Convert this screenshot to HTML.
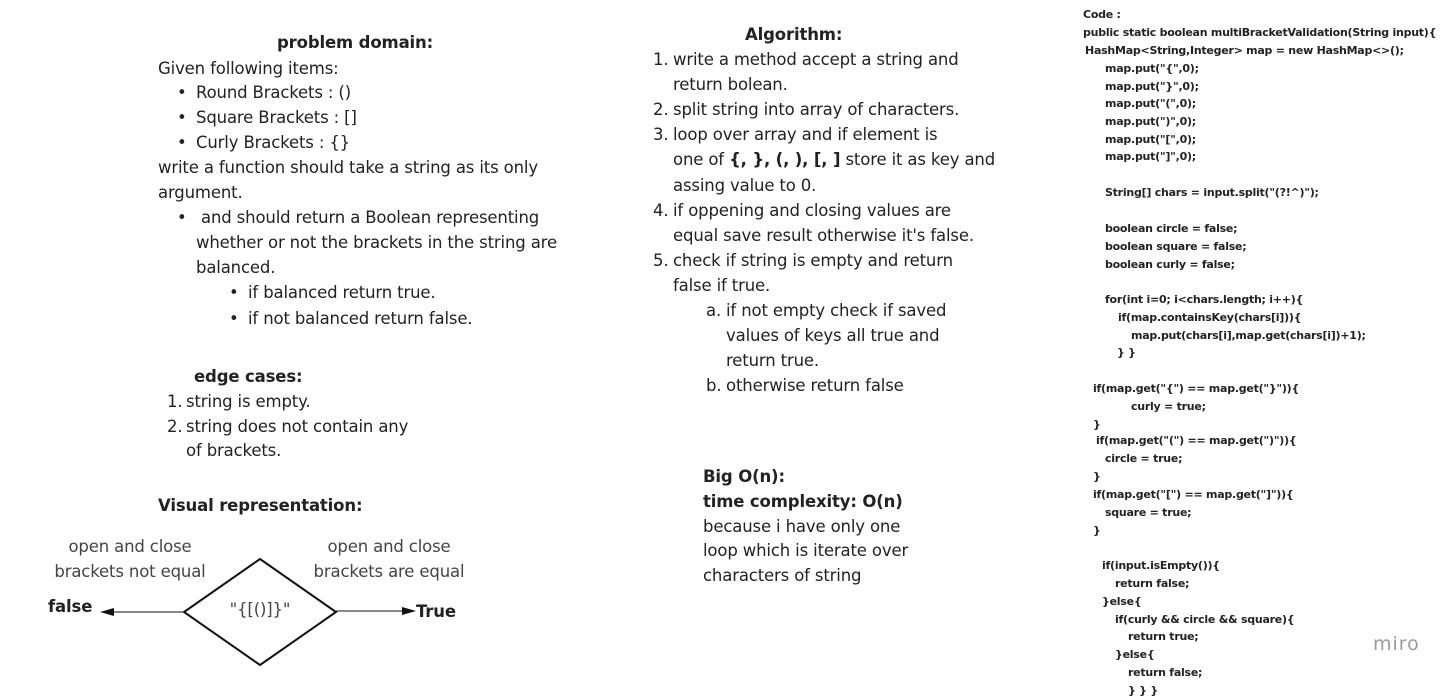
<!DOCTYPE html>
<html><head><meta charset="utf-8"><style>
body{margin:0;width:1454px;height:687px;background:#fff;overflow:hidden;position:relative;font-family:"DejaVu Sans","Liberation Sans",sans-serif;color:#222}
.t{position:absolute;font-size:16.5px;line-height:24px;white-space:nowrap;letter-spacing:-0.15px}
.b{font-weight:bold}
.c{position:absolute;font-family:"DejaVu Sans","Liberation Sans",sans-serif;font-weight:bold;font-size:11px;line-height:14px;white-space:nowrap;color:#222;letter-spacing:-0.25px}
</style></head><body>
<div class="t b" style="left:277px;top:31px">problem domain:</div>
<div class="t" style="left:158px;top:57px">Given following items:</div>
<div class="t" style="left:177px;top:81px">•</div><div class="t" style="left:196px;top:81px">Round Brackets : ()</div>
<div class="t" style="left:177px;top:106px">•</div><div class="t" style="left:196px;top:106px">Square Brackets : []</div>
<div class="t" style="left:177px;top:131px">•</div><div class="t" style="left:196px;top:131px">Curly Brackets : {}</div>
<div class="t" style="left:158px;top:156px">write a function should take a string as its only</div>
<div class="t" style="left:158px;top:181px">argument.</div>
<div class="t" style="left:177px;top:206px">•</div><div class="t" style="left:201px;top:206px">and should return a Boolean representing</div>
<div class="t" style="left:196px;top:231px">whether or not the brackets in the string are</div>
<div class="t" style="left:196px;top:256px">balanced.</div>
<div class="t" style="left:229px;top:281px">•</div><div class="t" style="left:248px;top:281px">if balanced return true.</div>
<div class="t" style="left:229px;top:307px">•</div><div class="t" style="left:248px;top:307px">if not balanced return false.</div>
<div class="t b" style="left:194px;top:365px">edge cases:</div>
<div class="t" style="left:167px;top:390px">1.</div><div class="t" style="left:186px;top:390px">string is empty.</div>
<div class="t" style="left:167px;top:415px">2.</div><div class="t" style="left:186px;top:415px">string does not contain any</div>
<div class="t" style="left:186px;top:439px">of brackets.</div>
<div class="t b" style="left:158px;top:494px">Visual representation:</div>
<div class="t" style="left:30px;width:200px;text-align:center;top:535px;color:#444">open and close</div>
<div class="t" style="left:30px;width:200px;text-align:center;top:560px;color:#444">brackets not equal</div>
<div class="t" style="left:289px;width:200px;text-align:center;top:535px;color:#444">open and close</div>
<div class="t" style="left:289px;width:200px;text-align:center;top:560px;color:#444">brackets are equal</div>
<svg style="position:absolute;left:0;top:0" width="1454" height="687">
<polygon points="260,559 336,612 260,665 184,612" fill="none" stroke="#111" stroke-width="2"/>
<line x1="184" y1="612" x2="112" y2="612" stroke="#111" stroke-width="1"/>
<polygon points="100,612 114,608 114,616" fill="#111"/>
<line x1="336" y1="611" x2="404" y2="611" stroke="#111" stroke-width="1"/>
<polygon points="416,611 402,607 402,615" fill="#111"/>
</svg>
<div class="t" style="left:210px;width:100px;text-align:center;top:598px;color:#444">"{[()]}"</div>
<div class="t b" style="left:48px;top:595px">false</div>
<div class="t b" style="left:416px;top:600px">True</div>

<div class="t b" style="left:745px;top:23px">Algorithm:</div>
<div class="t" style="left:653px;top:48px">1.</div><div class="t" style="left:673px;top:48px">write a method accept a string and</div>
<div class="t" style="left:673px;top:73px">return bolean.</div>
<div class="t" style="left:653px;top:98px">2.</div><div class="t" style="left:673px;top:98px">split string into array of characters.</div>
<div class="t" style="left:653px;top:123px">3.</div><div class="t" style="left:673px;top:123px">loop over array and if element is</div>
<div class="t" style="left:673px;top:148px">one of <b>{, }, (, ), [, ]</b> store it as key and</div>
<div class="t" style="left:673px;top:174px">assing value to 0.</div>
<div class="t" style="left:653px;top:199px">4.</div><div class="t" style="left:673px;top:199px">if oppening and closing values are</div>
<div class="t" style="left:673px;top:224px">equal save result otherwise it's false.</div>
<div class="t" style="left:653px;top:249px">5.</div><div class="t" style="left:673px;top:249px">check if string is empty and return</div>
<div class="t" style="left:673px;top:274px">false if true.</div>
<div class="t" style="left:706px;top:299px">a.</div><div class="t" style="left:726px;top:299px">if not empty check if saved</div>
<div class="t" style="left:726px;top:324px">values of keys all true and</div>
<div class="t" style="left:726px;top:349px">return true.</div>
<div class="t" style="left:706px;top:374px">b.</div><div class="t" style="left:726px;top:374px">otherwise return false</div>
<div class="t b" style="left:703px;top:465px">Big O(n):</div>
<div class="t b" style="left:703px;top:490px">time complexity: O(n)</div>
<div class="t" style="left:703px;top:515px">because i have only one</div>
<div class="t" style="left:703px;top:539px">loop which is iterate over</div>
<div class="t" style="left:703px;top:564px">characters of string</div>

<div class="c" style="left:1083px;top:8px">Code :</div>
<div class="c" style="left:1083px;top:26px">public static boolean multiBracketValidation(String input){</div>
<div class="c" style="left:1085px;top:44px">HashMap&lt;String,Integer&gt; map = new HashMap&lt;&gt;();</div>
<div class="c" style="left:1105px;top:62px">map.put("{",0);</div>
<div class="c" style="left:1105px;top:80px">map.put("}",0);</div>
<div class="c" style="left:1105px;top:97px">map.put("(",0);</div>
<div class="c" style="left:1105px;top:115px">map.put(")",0);</div>
<div class="c" style="left:1105px;top:133px">map.put("[",0);</div>
<div class="c" style="left:1105px;top:150px">map.put("]",0);</div>
<div class="c" style="left:1105px;top:186px">String[] chars = input.split("(?!^)");</div>
<div class="c" style="left:1105px;top:222px">boolean circle = false;</div>
<div class="c" style="left:1105px;top:240px">boolean square = false;</div>
<div class="c" style="left:1105px;top:258px">boolean curly = false;</div>
<div class="c" style="left:1105px;top:293px">for(int i=0; i&lt;chars.length; i++){</div>
<div class="c" style="left:1118px;top:311px">if(map.containsKey(chars[i])){</div>
<div class="c" style="left:1131px;top:329px">map.put(chars[i],map.get(chars[i])+1);</div>
<div class="c" style="left:1117px;top:346px">} }</div>
<div class="c" style="left:1093px;top:382px">if(map.get("{") == map.get("}")){</div>
<div class="c" style="left:1131px;top:400px">curly = true;</div>
<div class="c" style="left:1093px;top:418px">}</div>
<div class="c" style="left:1096px;top:434px">if(map.get("(") == map.get(")")){</div>
<div class="c" style="left:1105px;top:452px">circle = true;</div>
<div class="c" style="left:1093px;top:470px">}</div>
<div class="c" style="left:1093px;top:488px">if(map.get("[") == map.get("]")){</div>
<div class="c" style="left:1105px;top:506px">square = true;</div>
<div class="c" style="left:1093px;top:524px">}</div>
<div class="c" style="left:1102px;top:559px">if(input.isEmpty()){</div>
<div class="c" style="left:1115px;top:577px">return false;</div>
<div class="c" style="left:1102px;top:595px">}else{</div>
<div class="c" style="left:1115px;top:613px">if(curly &amp;&amp; circle &amp;&amp; square){</div>
<div class="c" style="left:1128px;top:630px">return true;</div>
<div class="c" style="left:1115px;top:648px">}else{</div>
<div class="c" style="left:1128px;top:666px">return false;</div>
<div class="c" style="left:1128px;top:684px">} } }</div>
<div style="position:absolute;left:1373px;top:633px;font-family:'DejaVu Sans',sans-serif;font-size:19px;color:#9a9a9a;letter-spacing:1px">miro</div>
</body></html>
